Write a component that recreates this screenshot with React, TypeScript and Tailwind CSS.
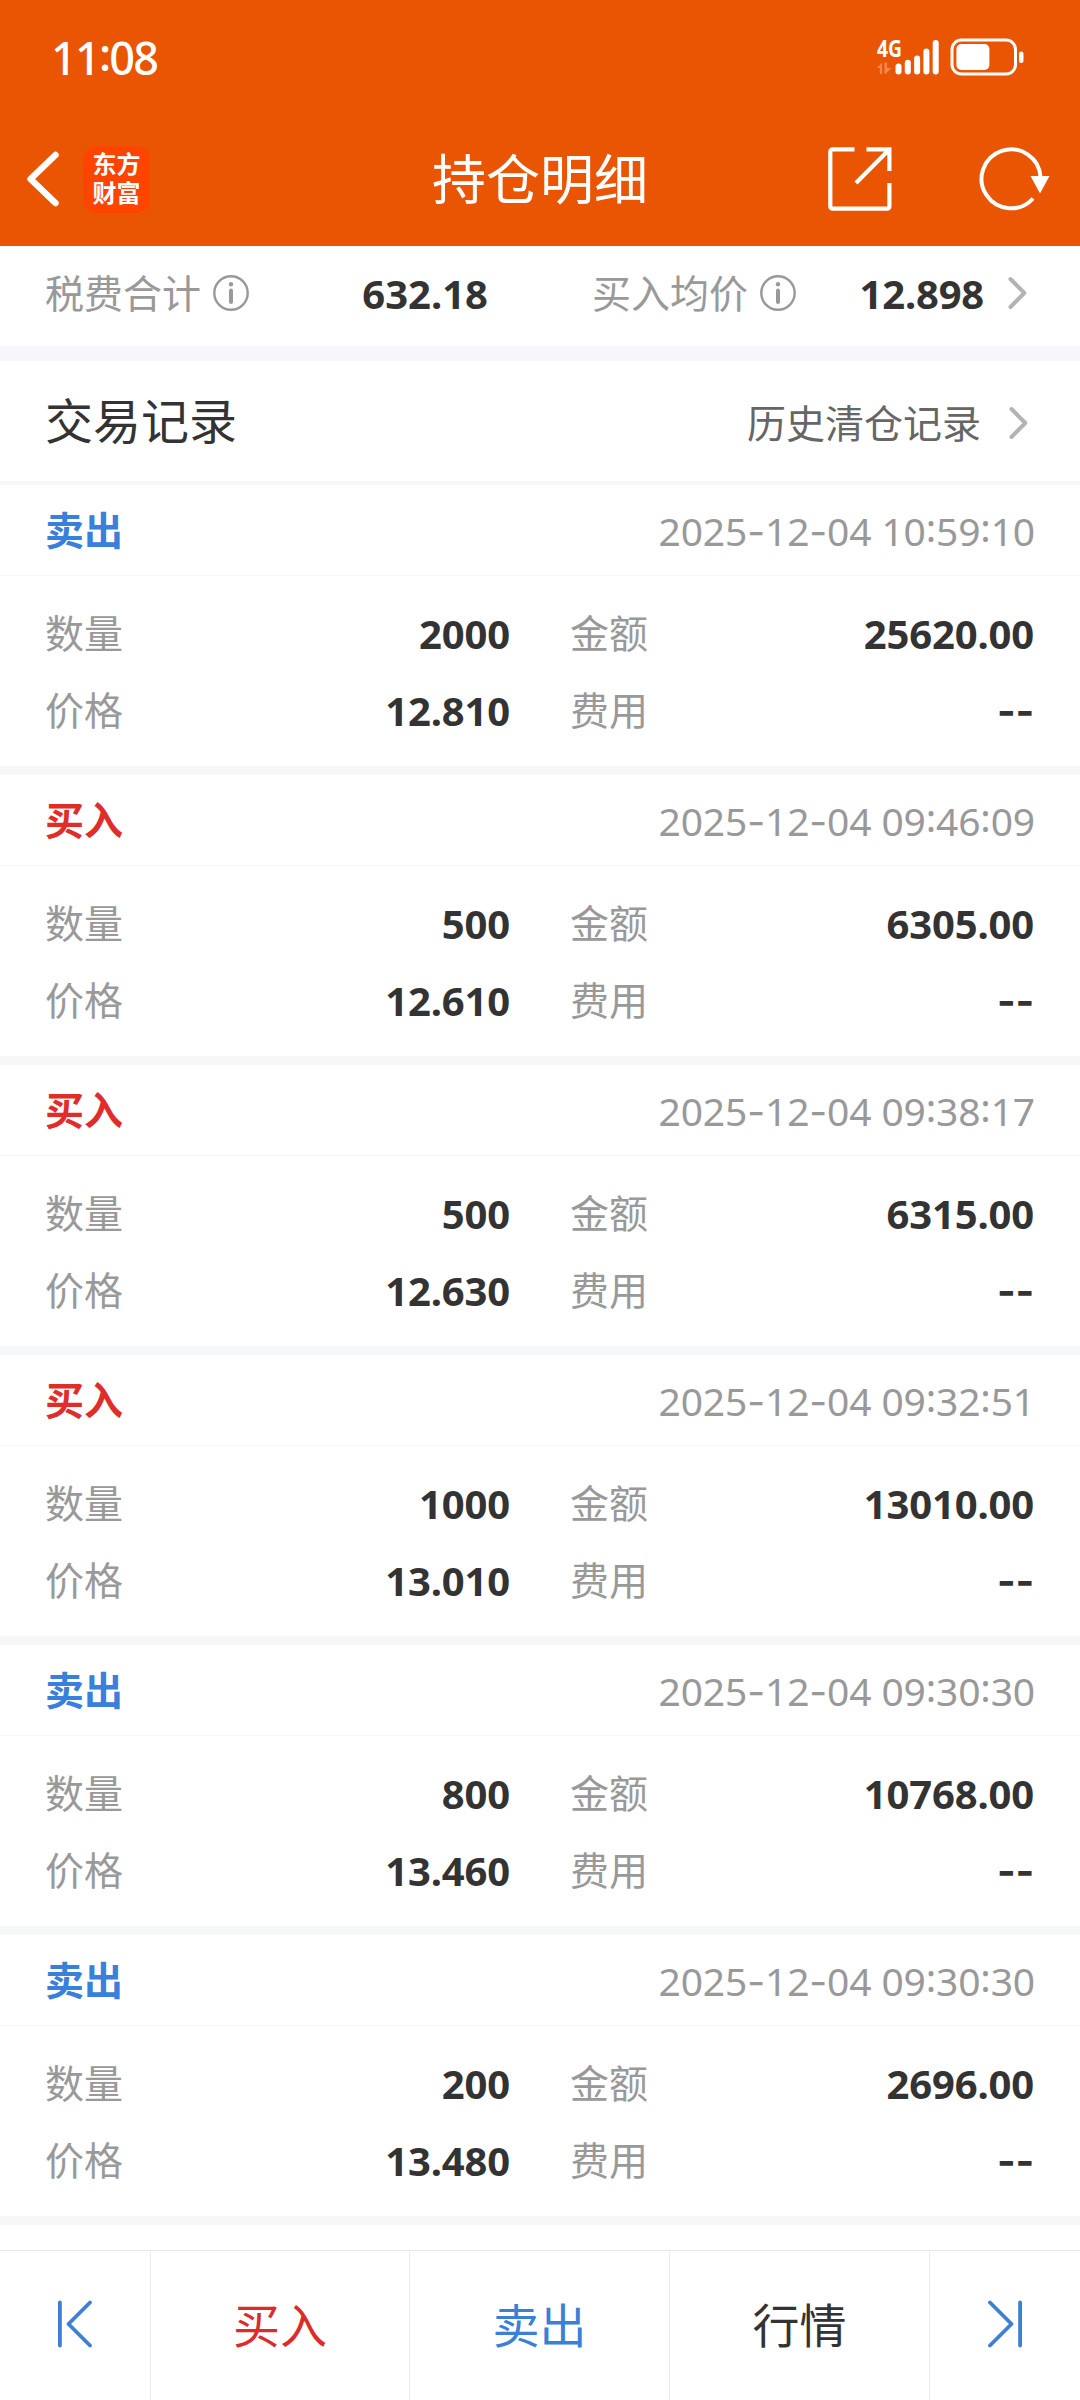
import clsx from "clsx";

type Side = "buy" | "sell";

type Trade = {
  side: Side;
  time: string;
  quantity: string;
  price: string;
  amount: string;
  fee: string;
};

const trades: Trade[] = [
  { side: "sell", time: "2025-12-04 10:59:10", quantity: "2000", price: "12.810", amount: "25620.00", fee: "--" },
  { side: "buy", time: "2025-12-04 09:46:09", quantity: "500", price: "12.610", amount: "6305.00", fee: "--" },
  { side: "buy", time: "2025-12-04 09:38:17", quantity: "500", price: "12.630", amount: "6315.00", fee: "--" },
  { side: "buy", time: "2025-12-04 09:32:51", quantity: "1000", price: "13.010", amount: "13010.00", fee: "--" },
  { side: "sell", time: "2025-12-04 09:30:30", quantity: "800", price: "13.460", amount: "10768.00", fee: "--" },
  { side: "sell", time: "2025-12-04 09:30:30", quantity: "200", price: "13.480", amount: "2696.00", fee: "--" },
];

// 短横用 Inter 更宽一些，冒号抬高到数字中线
function Digits({ text }: { text: string }) {
  return (
    <>
      {text.split(/([-:])/).map((part, i) => {
        if (part === "-") return <span key={i} className="font-['Inter',sans-serif]">-</span>;
        if (part === ":") return <span key={i} className="align-[0.09em]">:</span>;
        return part;
      })}
    </>
  );
}

function InfoIcon() {
  return (
    <svg width="36" height="36" viewBox="0 0 36 36" fill="none" className="shrink-0">
      <circle cx="18" cy="18" r="16.7" stroke="#999999" strokeWidth="2.4" />
      <circle cx="18" cy="9.2" r="2.2" fill="#999999" />
      <path d="M18 15.5V27" stroke="#999999" strokeWidth="4" strokeLinecap="round" />
    </svg>
  );
}

function ChevronIcon() {
  return (
    <svg width="19" height="34" viewBox="0 0 19 34" fill="none" className="shrink-0">
      <path d="M2.5 3L16.3 17L2.5 31" stroke="#b3b3b3" strokeWidth="4" strokeLinecap="round" strokeLinejoin="round" />
    </svg>
  );
}

function StatusIcons() {
  return (
    <svg width="150" height="53" viewBox="0 -8 150 53" fill="none">
      <text x="1" y="19" fontFamily="Noto Sans, sans-serif" fontSize="23" fontWeight="700" fill="#fff" textLength="25" lengthAdjust="spacingAndGlyphs">
        4G
      </text>
      <path d="M1 30L6 24.500V36H3.800V30ZM8.500 24.500H11V30H15.500L9.500 36H8.500Z" fill="#fff" fillOpacity="0.3" />
      <g fill="#fff">
        <rect x="19.500" y="25.500" width="6" height="11" rx="3" />
        <rect x="28.800" y="21.800" width="6" height="14.700" rx="3" />
        <rect x="38.100" y="17.500" width="6" height="19" rx="3" />
        <rect x="47.400" y="10.500" width="6" height="26" rx="3" />
        <rect x="56.700" y="2" width="6" height="34.500" rx="3" />
      </g>
      <rect x="76" y="2" width="63.500" height="34" rx="9.500" stroke="#fff" strokeWidth="3" />
      <rect x="80.400" y="6" width="33" height="26" rx="5" fill="#fff" />
      <rect x="143" y="13.500" width="4.500" height="11.500" rx="2.200" fill="#fff" />
    </svg>
  );
}

function Header() {
  return (
    <header className="h-[246px] bg-[#ea5504] text-white">
      <div className="flex h-28 items-center justify-between pr-[54px] pl-[51px]">
        <span className="text-[45px] leading-none font-medium tracking-[-1.8px]">
          <Digits text="11:08" />
        </span>
        <StatusIcons />
      </div>
      <div className="grid h-[134px] grid-cols-[1fr_auto_1fr] items-center">
        <div className="flex items-center pl-[26px]">
          <svg width="34" height="56" viewBox="0 0 34 56" fill="none">
            <path d="M29.500 4L4.500 28L29.500 52" stroke="#fff" strokeWidth="6.500" strokeLinecap="round" strokeLinejoin="round" />
          </svg>
          <div className="ml-[23px] flex h-[67px] w-[67px] flex-col items-center justify-center rounded-[14px] bg-[#ff4400] pb-0.5 text-2xl leading-[29px] font-bold">
            <span>东方</span>
            <span>财富</span>
          </div>
        </div>
        <h1 className="text-[54px] leading-none font-normal">持仓明细</h1>
        <div className="flex items-center justify-end pr-[30px]">
          <svg width="64" height="64" viewBox="0 0 64 64" fill="none" stroke="#fff" strokeWidth="4.200">
            <path d="M26.500 2.300H5Q2.300 2.300 2.300 5V59Q2.300 61.700 5 61.700H59Q61.400 61.700 61.400 59V36" />
            <path d="M38.500 2.300H61.400V24M61 2.700L28 36" />
          </svg>
          <svg width="72" height="66" viewBox="0 0 72 66" fill="none" className="ml-[86px]">
            <path d="M62.500 31A29.500 29.500 0 1 0 55 52.500" stroke="#fff" strokeWidth="4" />
            <path d="M52.500 30H71.500L62 47.500Z" fill="#fff" />
          </svg>
        </div>
      </div>
    </header>
  );
}

function Summary() {
  return (
    <section className="flex h-[100px] items-center pb-1.5 pl-[45px] text-[39px] leading-none">
      <div className="flex w-[443px] items-center">
        <span className="pb-0.5 text-[#999999]">税费合计</span>
        <span className="ml-3">
          <InfoIcon />
        </span>
        <span className="ml-auto pt-0.5 text-[40px] font-bold text-[#333333]">632.18</span>
      </div>
      <div className="ml-[104px] flex w-[392px] items-center">
        <span className="pb-0.5 text-[#999999]">买入均价</span>
        <span className="ml-3">
          <InfoIcon />
        </span>
        <span className="ml-auto pt-0.5 text-[40px] font-bold tracking-[-0.2px] text-[#333333]">12.898</span>
      </div>
      <span className="ml-6">
        <ChevronIcon />
      </span>
    </section>
  );
}

function Field({ label, value }: { label: string; value: string }) {
  return (
    <div className="flex h-[77px] items-center justify-between">
      <span className="pb-[3px] text-[#999999]">{label}</span>
      <span className="text-[40px] font-bold tracking-[-0.15px] text-[#333333]">
        <Digits text={value} />
      </span>
    </div>
  );
}

function TradeCard({ trade }: { trade: Trade }) {
  return (
    <li className="h-[290px] border-b-[9px] border-[#f6f7f9] text-[39px] leading-none">
      <div className="flex h-[91px] items-center justify-between border-b border-[#f6f6f7] px-[45px]">
        <span className={clsx("pb-0.5 font-bold", trade.side === "buy" ? "text-[#e02d2a]" : "text-[#3880dc]")}>
          {trade.side === "buy" ? "买入" : "卖出"}
        </span>
        <span className="pb-[3px] tracking-[-0.15px] text-[#999999]">
          <Digits text={trade.time} />
        </span>
      </div>
      <div className="grid grid-cols-[465px_464px] gap-x-[60px] pt-[19px] pl-[45px]">
        <Field label="数量" value={trade.quantity} />
        <Field label="金额" value={trade.amount} />
        <Field label="价格" value={trade.price} />
        <Field label="费用" value={trade.fee} />
      </div>
    </li>
  );
}

function BottomBar() {
  return (
    <nav className="grid h-[150px] grid-cols-[151px_259px_260px_260px_150px] divide-x divide-[#ececec] border-t border-[#e8e8e8] text-[47px] leading-none">
      <button className="flex items-center justify-center pb-1">
        <svg width="36" height="48" viewBox="0 0 36 48" fill="none" stroke="#3d80d2" strokeWidth="3.800" strokeLinecap="round" strokeLinejoin="round">
          <path d="M2.900 2.500V45.500M33 2.500L11.500 24L33 45.500" />
        </svg>
      </button>
      <button className="text-[#dc2c2a]">买入</button>
      <button className="text-[#3a80d6]">卖出</button>
      <button className="text-[#333333]">行情</button>
      <button className="flex items-center justify-center pb-1">
        <svg width="36" height="48" viewBox="0 0 36 48" fill="none" stroke="#3d80d2" strokeWidth="3.800" strokeLinecap="round" strokeLinejoin="round">
          <path d="M33.100 2.500V45.500M3 2.500L24.500 24L3 45.500" />
        </svg>
      </button>
    </nav>
  );
}

export default function App() {
  return (
    <main className="flex h-[2400px] w-[1080px] flex-col overflow-hidden bg-white font-['Noto_Sans','Noto_Sans_CJK_SC',sans-serif]">
      <Header />
      <Summary />
      <div className="h-[15px] bg-[#f6f7fa]" />
      <section className="flex h-[124px] items-center justify-between border-b-4 border-[#f6f7f9] pr-[52px] pb-px pl-[45px] leading-none">
        <h2 className="text-[48px] font-normal text-[#333333]">交易记录</h2>
        <div className="flex items-center pt-1 text-[39px] text-[#666666]">
          <span className="pb-px">历史清仓记录</span>
          <span className="ml-[28px]">
            <ChevronIcon />
          </span>
        </div>
      </section>
      <ul className="flex-1">
        {trades.map((trade, i) => (
          <TradeCard key={i} trade={trade} />
        ))}
      </ul>
      <BottomBar />
    </main>
  );
}
